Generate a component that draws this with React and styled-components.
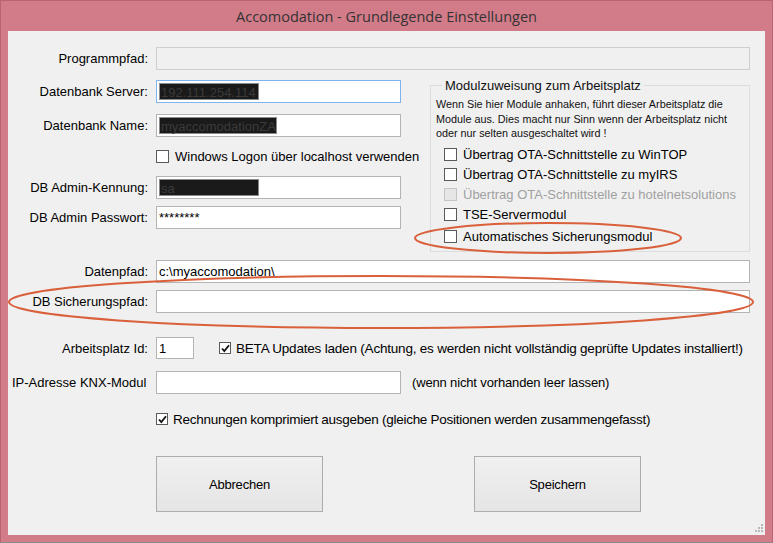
import React from 'react';
import styled, { createGlobalStyle } from 'styled-components';

const GlobalStyle = createGlobalStyle`
  html, body { margin: 0; padding: 0; background: #f0f0f0; }
  body { font-family: "Liberation Sans", Arial, sans-serif; color: #000; }
`;

const Window = styled.div`
  position: relative;
  width: 773px;
  height: 543px;
  box-sizing: border-box;
  background: #d27b89;
  border: 1px solid #b86573;
  border-bottom-color: #8a8a8a;
  display: flex;
  flex-direction: column;
  overflow: hidden;
`;

const TitleBar = styled.div`
  height: 30px;
  display: flex;
  align-items: center;
  justify-content: center;
  font-family: "Open Sans", "Liberation Sans", sans-serif;
  font-size: 14.5px;
  color: #333;
`;

const Body = styled.div`
  flex: 1;
  margin: 0 7px 7px 7px;
  background: #f0f0f0;
  padding: 0 15px 0 0;
  position: relative;
  font-size: 13px;
`;

const Row = styled.div`
  display: flex;
  align-items: center;
  height: ${p => p.h || 23}px;
  margin-top: ${p => p.mt || 0}px;
`;

const Label = styled.div`
  flex: none;
  width: 140px;
  margin-right: 8px;
  text-align: ${p => (p.left ? 'left' : 'right')};
  padding-left: ${p => (p.left ? '4px' : '0')};
  box-sizing: border-box;
  white-space: nowrap;
  letter-spacing: ${p => p.ls || 0}px;
`;

const Field = styled.div`
  box-sizing: border-box;
  height: ${p => p.h || 23}px;
  width: ${p => (p.w ? `${p.w}px` : 'auto')};
  flex: ${p => (p.w ? 'none' : '1')};
  background: ${p => (p.disabled ? '#f0f0f0' : '#fff')};
  border: 1px solid ${p => (p.focus ? '#7eb4ea' : p.disabled ? '#cfcfcf' : '#b4b4b4')};
  display: flex;
  align-items: center;
  padding: 0 2px;
  white-space: nowrap;
  font-size: 13px;
`;

const Redacted = styled.span`
  display: inline-block;
  background: #1a1a1a;
  color: #3a3a3a;
  height: 17px;
  line-height: 17px;
  width: ${p => p.w}px;
  border: 1px solid #8a8a8a;
  box-sizing: border-box;
  padding-left: 1px;
`;

const Top = styled.div`
  display: flex;
  margin-top: 10px;
`;

const LeftCol = styled.div`
  width: 393px;
`;

const GroupBox = styled.fieldset`
  margin: -2px 0 0 29px;
  flex: 1;
  border: 1px solid #dcdcdc;
  padding: 0 0 6px 5px;
  height: 174px;
  box-sizing: border-box;
`;

const Legend = styled.legend`
  padding: 0 3px;
  margin-left: 6px;
  font-size: 13px;
  color: #111;
`;

const Note = styled.div`
  font-size: 10.8px;
  line-height: 14.5px;
  margin-top: 4px;
  margin-bottom: 4px;
  color: #111;
`;

const Check = styled.label`
  display: flex;
  align-items: center;
  gap: ${p => p.gap || 6}px;
  height: ${p => p.h || 20}px;
  font-size: ${p => p.fs || 13}px;
  letter-spacing: ${p => p.ls || 0}px;
  color: ${p => (p.disabled ? '#a0a0a0' : '#000')};
  white-space: nowrap;
  margin-left: ${p => p.ml || 0}px;
`;

const Box = styled.span`
  width: ${p => p.s || 13}px;
  height: ${p => p.s || 13}px;
  box-sizing: border-box;
  flex: none;
  border: 1px solid ${p => (p.disabled ? '#c4c4c4' : '#5a5a5a')};
  background: ${p => (p.disabled ? '#e6e6e6' : '#fff')};
  display: flex;
  align-items: center;
  justify-content: center;
`;

const CheckBox = ({ checked, disabled, s }) => (
  <Box disabled={disabled} s={s}>
    {checked && (
      <svg width="9" height="9" viewBox="0 0 9 9">
        <path d="M1 4.5 L3.3 7 L8 1.2" fill="none" stroke="#111" strokeWidth="1.8" />
      </svg>
    )}
  </Box>
);

const Hint = styled.span`
  margin-left: 11px;
  font-size: 13px;
  letter-spacing: -0.15px;
  white-space: nowrap;
`;

const Buttons = styled.div`
  display: flex;
  margin-top: 26px;
  padding-left: 148px;
  gap: 151px;
`;

const Button = styled.button`
  width: 167px;
  height: 56px;
  border: 1px solid #adadad;
  background: linear-gradient(#f0f0f0, #e5e5e5);
  font-family: "Liberation Sans", Arial, sans-serif;
  font-size: 13px;
  letter-spacing: -0.2px;
  color: #000;
`;

const Grip = styled.svg`
  position: absolute;
  right: 2px;
  bottom: 2px;
`;

const Marks = styled.svg`
  position: absolute;
  left: 0;
  top: 0;
  pointer-events: none;
`;

export default function App() {
  return (
    <>
      <GlobalStyle />
      <Window>
        <TitleBar>Accomodation - Grundlegende Einstellungen</TitleBar>
        <Body>
          <Row mt={16}>
            <Label>Programmpfad:</Label>
            <Field disabled />
          </Row>
          <Top>
            <LeftCol>
              <Row>
                <Label>Datenbank Server:</Label>
                <Field focus>
                  <Redacted w={100}>192.111.254.114</Redacted>
                </Field>
              </Row>
              <Row mt={11}>
                <Label>Datenbank Name:</Label>
                <Field>
                  <Redacted w={118}>myaccomodationZA</Redacted>
                </Field>
              </Row>
              <Row mt={7} h={24}>
                <Label />
                <Check>
                  <CheckBox />
                  Windows Logon über localhost verwenden
                </Check>
              </Row>
              <Row mt={8}>
                <Label>DB Admin-Kennung:</Label>
                <Field>
                  <Redacted w={100}>sa</Redacted>
                </Field>
              </Row>
              <Row mt={7}>
                <Label>DB Admin Passwort:</Label>
                <Field>********</Field>
              </Row>
            </LeftCol>
            <GroupBox>
              <Legend>Modulzuweisung zum Arbeitsplatz</Legend>
              <Note>
                Wenn Sie hier Module anhaken, führt dieser Arbeitsplatz die
                <br />
                Module aus. Dies macht nur Sinn wenn der Arbeitsplatz nicht
                <br />
                oder nur selten ausgeschaltet wird !
              </Note>
              <Check ml={8}>
                <CheckBox />
                Übertrag OTA-Schnittstelle zu WinTOP
              </Check>
              <Check ml={8}>
                <CheckBox />
                Übertrag OTA-Schnittstelle zu myIRS
              </Check>
              <Check ml={8} disabled>
                <CheckBox disabled />
                Übertrag OTA-Schnittstelle zu hotelnetsolutions
              </Check>
              <Check ml={8}>
                <CheckBox />
                TSE-Servermodul
              </Check>
              <Check ml={8} h={24}>
                <CheckBox />
                Automatisches Sicherungsmodul
              </Check>
            </GroupBox>
          </Top>
          <Row mt={8}>
            <Label>Datenpfad:</Label>
            <Field>c:\myaccomodation\</Field>
          </Row>
          <Row mt={7}>
            <Label>DB Sicherungspfad:</Label>
            <Field />
          </Row>
          <Row mt={24} h={22}>
            <Label>Arbeitsplatz Id:</Label>
            <Field w={38} h={22}>1</Field>
            <Check ml={25} gap={5} fs={13.5} ls={-0.2}>
              <CheckBox checked s={12} />
              BETA Updates laden (Achtung, es werden nicht vollständig geprüfte Updates installiert!)
            </Check>
          </Row>
          <Row mt={12}>
            <Label left>IP-Adresse KNX-Modul</Label>
            <Field w={245} />
            <Hint>(wenn nicht vorhanden leer lassen)</Hint>
          </Row>
          <Row mt={14} h={22}>
            <Label />
            <Check gap={5} fs={13.5} ls={-0.27}>
              <CheckBox checked s={12} />
              Rechnungen komprimiert ausgeben (gleiche Positionen werden zusammengefasst)
            </Check>
          </Row>
          <Buttons>
            <Button>Abbrechen</Button>
            <Button>Speichern</Button>
          </Buttons>
          <Grip width="10" height="10" viewBox="0 0 10 10">
            {[[8, 0], [8, 3], [5, 3], [8, 6], [5, 6], [2, 6]].map(([x, y]) => (
              <rect key={`${x}-${y}`} x={x} y={y + 1} width="2" height="2" fill="#b8b8b8" />
            ))}
          </Grip>
        </Body>
        <Marks width="773" height="543">
          <ellipse cx="547" cy="237" rx="133" ry="15" fill="none" stroke="#d9603b" strokeWidth="2" />
          <ellipse cx="380" cy="301" rx="372" ry="26" fill="none" stroke="#d9603b" strokeWidth="2" />
        </Marks>
      </Window>
    </>
  );
}
